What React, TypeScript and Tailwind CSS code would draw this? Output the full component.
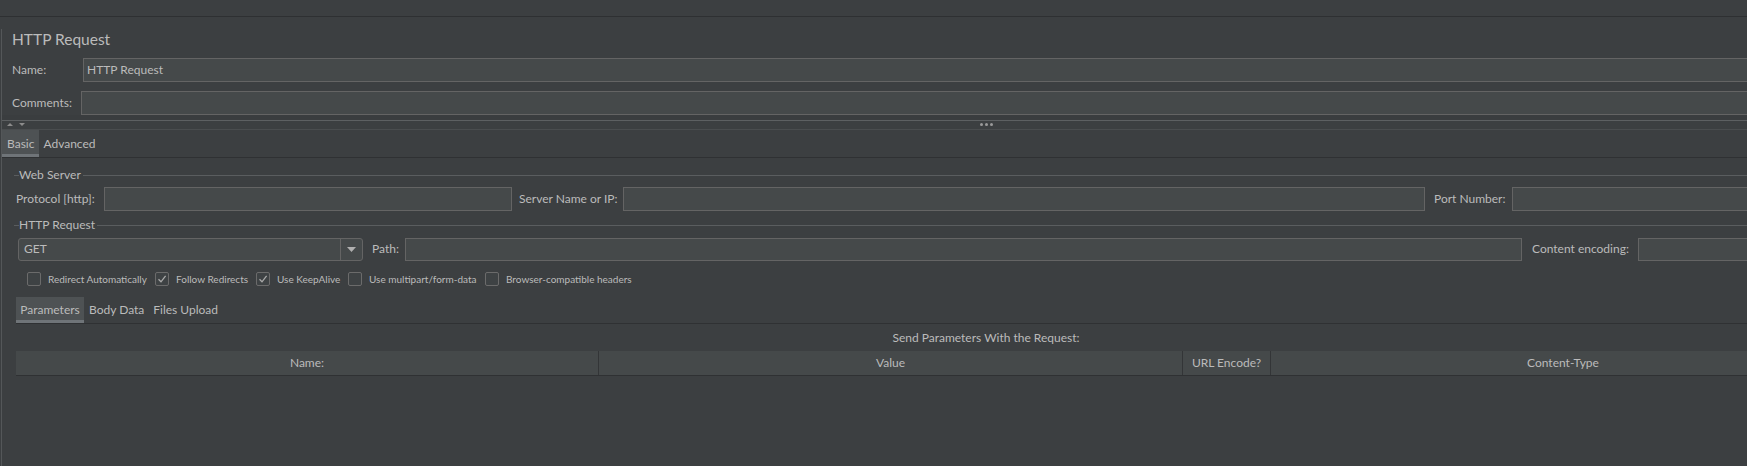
import React from "react";

const Field = ({ className = "", children }: { className?: string; children?: React.ReactNode }) => (
  <div className={"h-full border border-[#646464] bg-[#45494a] flex items-center pl-[3px] text-[12px] " + className}>
    {children}
  </div>
);

const Legend = ({ title }: { title: string }) => (
  <div className="flex h-[14px] items-center">
    <div className="h-px w-[5px] bg-[#5a5d5f]" />
    <span className="text-[12px] leading-[14px]">{title}</span>
    <div className="ml-[2px] h-px flex-1 bg-[#5a5d5f]" />
  </div>
);

const Check = ({ label, checked, w }: { label: string; checked?: boolean; w: string }) => (
  <div className={"flex h-[14px] items-center gap-[7px] " + w}>
    <div className="flex h-[14px] w-[14px] items-center justify-center rounded-[2px] border border-[#6b6b6b] bg-[#3e4244]">
      {checked && (
        <svg width="10" height="10" viewBox="0 0 10 10">
          <path d="M1.5 5.2 L4 7.8 L8.6 1.8" fill="none" stroke="#a9a9a9" strokeWidth="1.3" />
        </svg>
      )}
    </div>
    <span className="whitespace-nowrap text-[10px]">{label}</span>
  </div>
);

const App = () => {
  return (
    <div className="h-[466px] w-[1747px] overflow-hidden bg-[#3c3f41] font-['Lato',sans-serif] text-[#bbbbbb]">
      <div className="h-[17px] border-b border-[#2e3032]" />
      <div className="ml-[1px] h-[449px] w-[1967px] border-l border-[#545759]">
        {/* header */}
        <div className="pl-[10px]">
          <div className="mt-[12px] h-[20px] text-[15.5px] leading-[20px]">HTTP Request</div>
          <div className="mt-[9px] flex h-[24px] items-center">
            <span className="w-[71px] text-[12px]">Name:</span>
            <Field className="flex-1">HTTP Request</Field>
          </div>
          <div className="mt-[9px] flex h-[24px] items-center">
            <span className="w-[69px] text-[12px]">Comments:</span>
            <Field className="flex-1" />
          </div>
        </div>
        <div className="h-[5px] bg-[#3a3d3f]" />
        {/* splitter */}
        <div className="relative flex h-[10px] items-center border-y border-t-[#5d6062] border-b-[#4a4d4f]">
          <svg className="ml-[5px]" width="22" height="6" viewBox="0 0 22 6">
            <path d="M0 4 L3 1 L6 4 Z" fill="#8c8c8c" />
            <path d="M12 1 L18 1 L15 4 Z" fill="#8c8c8c" />
          </svg>
          <div className="absolute left-[978px] top-[2px] flex gap-[2px]">
            <div className="h-[3px] w-[3px] rounded-full bg-[#9a9a9a]" />
            <div className="h-[3px] w-[3px] rounded-full bg-[#9a9a9a]" />
            <div className="h-[3px] w-[3px] rounded-full bg-[#9a9a9a]" />
          </div>
        </div>
        {/* tabs */}
        <div className="flex h-[28px] border-b border-[#2f3133] text-[12px]">
          <div className="flex items-center border-b-[3px] border-[#6f7478] bg-[#4e5254] px-[5px] pt-[3px]">Basic</div>
          <div className="flex items-center px-[4px]">Advanced</div>
        </div>

        <div className="pl-[12px] pr-[12px]">
          <div className="mt-[10px]">
            <Legend title="Web Server" />
          </div>
          <div className="mt-[5px] flex h-[24px] items-center text-[12px]">
            <span className="w-[90px] pl-[2px]">Protocol [http]:</span>
            <Field className="w-[408px]" />
            <span className="w-[111px] pl-[7px]">Server Name or IP:</span>
            <Field className="w-[802px]" />
            <span className="w-[87px] pl-[9px]">Port Number:</span>
            <Field className="flex-1" />
          </div>

          <div className="mt-[7px]">
            <Legend title="HTTP Request" />
          </div>
          <div className="mt-[5px] flex h-[24px] items-center text-[12px]">
            <div className="ml-[4px] flex h-[23px] w-[345px] rounded-[3px] border border-[#646464] bg-[#45494a]">
              <div className="flex flex-1 items-center pl-[5px]">GET</div>
              <div className="flex w-[22px] items-center justify-center border-l border-[#646464]">
                <svg width="9" height="5" viewBox="0 0 9 5">
                  <path d="M0 0 L9 0 L4.5 5 Z" fill="#b0b0b0" />
                </svg>
              </div>
            </div>
            <span className="w-[42px] pl-[9px]">Path:</span>
            <Field className="h-[23px]! w-[1117px]" />
            <span className="w-[116px] pl-[10px]">Content encoding:</span>
            <Field className="h-[23px]! flex-1" />
          </div>

          <div className="ml-[13px] mt-[11px] flex h-[14px] items-center">
            <Check w="w-[128px]" label="Redirect Automatically" />
            <Check w="w-[101px]" label="Follow Redirects" checked />
            <Check w="w-[92px]" label="Use KeepAlive" checked />
            <Check w="w-[137px]" label="Use multipart/form-data" />
            <Check w="w-[160px]" label="Browser-compatible headers" />
          </div>

          <div className="ml-[2px] mt-[11px] flex h-[27px] border-b border-[#2f3133] text-[12px]">
            <div className="flex w-[68px] items-center justify-center border-b-[3px] border-[#6f7478] bg-[#4e5254] pt-[3px] whitespace-nowrap">Parameters</div>
            <div className="flex items-center pl-[5px] pr-[5px]">Body Data</div>
            <div className="flex items-center px-[4px]">Files Upload</div>
          </div>

          <div className="ml-[2px]">
            <div className="flex h-[27px] items-center justify-center text-[12px]">Send Parameters With the Request:</div>
            <div className="flex h-[25px] border-b border-[#2f3133] bg-[#45494a] text-[12px]">
              <div className="flex w-[583px] items-center justify-center border-r border-[#333537]">Name:</div>
              <div className="flex w-[584px] items-center justify-center border-r border-[#333537]">Value</div>
              <div className="flex w-[88px] items-center justify-center border-r border-[#333537]">URL Encode?</div>
              <div className="flex w-[584px] items-center justify-center">Content-Type</div>
            </div>
          </div>
        </div>
      </div>
    </div>
  );
};

export default App;
